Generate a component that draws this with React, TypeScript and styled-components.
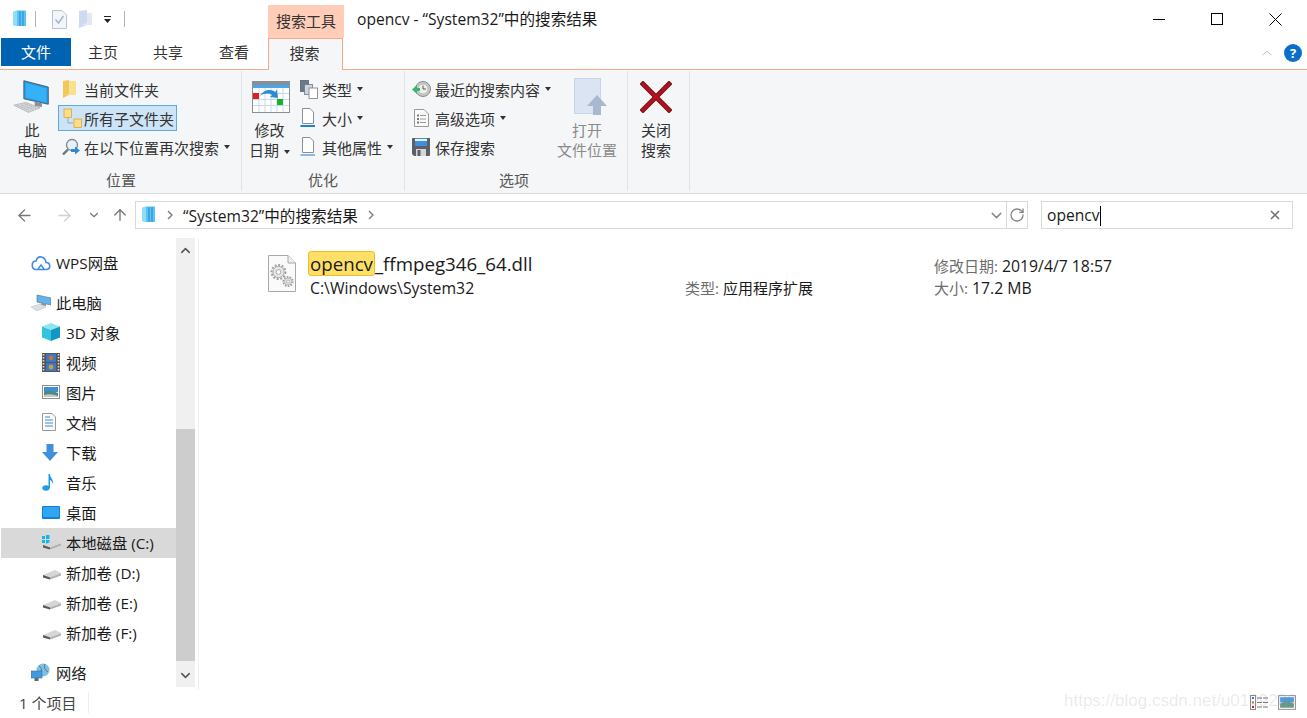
import React from "react";
import styled, { createGlobalStyle } from "styled-components";
import { ArrowLeft, ArrowRight, ArrowUp, ChevronDown, ChevronUp, RotateCw, X } from "lucide-react";

const GlobalStyle = createGlobalStyle`
  html, body { margin: 0; padding: 0; background: #fff; }
  body { font-family: "Open Sans", "Noto Sans CJK SC", sans-serif; font-size: 15px; color: #1a1a1a; }
  * { box-sizing: border-box; }
`;

/* ---------- icons ---------- */

const AppIcon = ({ size = 16 }: { size?: number }) => (
  <svg width={size} height={size + 2} viewBox="0 0 16 18">
    <path d="M1 2 L5 0.5 H14 V16 H5 L1 15 Z" fill="#5cc3f5" />
    <path d="M1 2 L5 0.5 V16 L1 15 Z" fill="#8fdcfb" />
    <path d="M8 1 V16 M11 1 V16" stroke="#1c87cf" strokeWidth="1" />
  </svg>
);

const CheckDoc = () => (
  <svg width="15" height="19" viewBox="0 0 15 19">
    <path d="M.5.5 H10 L14.5 5 V18.5 H.5 Z" fill="#f2f5fa" stroke="#b9c3d6" />
    <path d="M3.5 9.5 L6.5 13 L11.5 6" fill="none" stroke="#a7b2c8" strokeWidth="1.4" />
  </svg>
);

const FadedFolder = () => (
  <svg width="13" height="19" viewBox="0 0 13 19">
    <path d="M0 1 L8 0 V15 L0 18 Z" fill="#cfdaf0" />
    <path d="M8 3 H13 V15 H2 L8 13 Z" fill="#e2e9f6" />
  </svg>
);

const QatMenu = () => (
  <svg width="7" height="7" viewBox="0 0 7 7">
    <path d="M0 .5 H7" stroke="#222" />
    <path d="M0 3 H7 L3.5 7 Z" fill="#222" />
  </svg>
);

const Computer = () => (
  <svg width="38" height="36" viewBox="0 0 42 38">
    <path d="M12 1 L39 8 V27 L12 21 Z" fill="#1d9bf0" stroke="#555" strokeWidth="1" />
    <path d="M14 3.5 L37 9.5 V25 L14 19.5 Z" fill="#36b0f7" />
    <path d="M24 24 L32 26 V30 L24 29 Z" fill="#8c9199" />
    <path d="M1 28 L14 25 L30 31 L17 36 Z" fill="#d5d7da" stroke="#a5a7aa" strokeWidth=".7" />
    <path d="M5 28.5 L18 33.5 M9 27.5 L22 32.5 M13 26.5 L26 31.5" stroke="#9a9c9f" strokeWidth=".8" strokeDasharray="1.4 1" />
  </svg>
);

const YellowFolder = () => (
  <svg width="13" height="18" viewBox="0 0 13 18">
    <path d="M0 1 L6 0 V15 L0 18 Z" fill="#f2c75c" />
    <path d="M6 1 H13 V15 H2 L6 14 Z" fill="#fbe08f" />
  </svg>
);

const SubFolders = () => (
  <svg width="20" height="21" viewBox="0 0 20 21">
    <path d="M5 9 V15 H10" fill="none" stroke="#9aa4b0" />
    <rect x="1" y="1" width="7.5" height="8.5" fill="#fbdd85" stroke="#d8a73a" strokeWidth=".8" />
    <rect x="11" y="11" width="7.5" height="8.5" fill="#fbdd85" stroke="#d8a73a" strokeWidth=".8" />
  </svg>
);

const SearchAgain = () => (
  <svg width="19" height="18" viewBox="0 0 19 18">
    <circle cx="10" cy="7" r="5.5" fill="#e8f1fa" stroke="#7d8893" strokeWidth="1.3" />
    <path d="M6 11.5 L1 16.5" stroke="#6f7680" strokeWidth="2.4" />
    <path d="M9 11 H13 V8.5 L18 12.5 L13 16.5 V14 H9 Z" fill="#2d8ad8" />
  </svg>
);

const Calendar = () => (
  <svg width="38" height="32" viewBox="0 0 38 32">
    <rect x=".5" y=".5" width="37" height="31" fill="#fff" stroke="#8a8f96" />
    <rect x="0" y="0" width="38" height="4" fill="#8a8f96" />
    <rect x="1" y="4" width="36" height="3" fill="#46a7ea" />
    <path d="M1 12.5 H37 M1 18.5 H37 M1 24.5 H37 M7 7 V31 M13 7 V31 M19 7 V31 M25 7 V31 M31 7 V31" stroke="#c5d9e6" strokeWidth="1" />
    <rect x="1" y="12" width="6" height="6" fill="#dc2020" />
    <rect x="25" y="18" width="6" height="6" fill="#17b02f" />
    <path d="M8 15 C12 8 20 8 23 11 L25 9 L26 17 L18 16 L20 14 C17 12 12 12 8 15 Z" fill="#2d8ad8" />
  </svg>
);

const TypeIcon = () => (
  <svg width="18" height="19" viewBox="0 0 18 19">
    <rect x=".5" y=".5" width="8" height="11" fill="#6a7a8c" stroke="#555" strokeWidth=".7" />
    <rect x="4.5" y="4.5" width="8" height="10" fill="#c8d6e6" stroke="#777" strokeWidth=".8" />
    <rect x="9" y="8" width="8.5" height="10.5" fill="#fff" stroke="#888" strokeWidth=".9" />
  </svg>
);

const SizeIcon = ({ line = "#1f7fd0", thin = false }: { line?: string; thin?: boolean }) => (
  <svg width="16" height="20" viewBox="0 0 16 20">
    <path d="M2.5.5 H10 L13.5 4 V15.5 H2.5 Z" fill="#fff" stroke="#8a8f96" />
    <path d="M.5 18 H15" stroke={line} strokeWidth={thin ? 1 : 2} />
  </svg>
);

const RecentIcon = () => (
  <svg width="19" height="18" viewBox="0 0 19 18">
    <circle cx="11" cy="9" r="7.5" fill="#c7ccc9" stroke="#858a88" />
    <circle cx="11" cy="9" r="5" fill="#eef0ee" stroke="#9da29f" strokeWidth=".6" />
    <path d="M11 5.5 V9 H14" fill="none" stroke="#555" />
    <path d="M0 9.5 L5 5 V8 H8 V11 H5 V14 Z" fill="#3cb371" />
  </svg>
);

const AdvancedIcon = () => (
  <svg width="15" height="18" viewBox="0 0 15 18">
    <path d="M.5.5 H10 L14.5 5 V17.5 H.5 Z" fill="#fafafa" stroke="#9a9a9a" />
    <path d="M6 6.5 H12 M6 10 H12 M6 13.5 H12" stroke="#9a9a9a" />
    <rect x="3" y="5.5" width="2" height="2" fill="#777" />
    <rect x="3" y="9" width="2" height="2" fill="#777" />
    <rect x="3" y="12.5" width="2" height="2" fill="#777" />
  </svg>
);

const SaveIcon = () => (
  <svg width="18" height="18" viewBox="0 0 18 18">
    <path d="M0 1 Q0 0 1 0 H18 V17 Q18 18 17 18 H2 L0 16 Z" fill="#5d6066" />
    <rect x="3" y="0" width="12" height="8" fill="#3f8fdc" />
    <rect x="3" y="1" width="12" height="2" fill="#eaf2fb" />
    <rect x="4" y="11" width="10" height="7" fill="#d4d6d9" />
    <rect x="5.5" y="12" width="3" height="6" fill="#5d6066" />
  </svg>
);

const OpenLocation = () => (
  <svg width="33" height="38" viewBox="0 0 33 38">
    <rect x=".5" y=".5" width="26" height="35" fill="#dbe4f2" stroke="#c8d4e6" />
    <path d="M23 17 L33 28 H27 V37 H19 V28 H13 Z" fill="#a9b7cf" />
  </svg>
);

const BigX = () => (
  <svg width="32" height="32" viewBox="0 0 32 32">
    <path d="M3 3 L29 29 M29 3 L3 29" stroke="#6e1717" strokeWidth="5" strokeLinecap="square" />
    <path d="M3 3 L29 29 M29 3 L3 29" stroke="#b80f1e" strokeWidth="3" strokeLinecap="square" />
  </svg>
);

const Help = () => (
  <svg width="18" height="18" viewBox="0 0 18 18">
    <circle cx="9" cy="9" r="9" fill="#0a6fc8" />
    <text x="9" y="14" textAnchor="middle" fontSize="13" fontWeight="700" fill="#fff" fontFamily="Open Sans">?</text>
  </svg>
);

const WinMin = () => (
  <svg width="12" height="12" viewBox="0 0 12 12"><path d="M0 6.5 H12" stroke="#000" /></svg>
);

const WinMax = () => (
  <svg width="12" height="12" viewBox="0 0 12 12"><rect x=".5" y=".5" width="11" height="11" fill="none" stroke="#000" /></svg>
);

const WinClose = () => (
  <svg width="13" height="13" viewBox="0 0 13 13"><path d="M.5 .5 L12.5 12.5 M12.5 .5 L.5 12.5" stroke="#000" /></svg>
);

const Chevron = () => (
  <svg width="6" height="10" viewBox="0 0 6 10"><path d="M1 1 L5 5 L1 9" fill="none" stroke="#777" strokeWidth="1.3" /></svg>
);

const Cloud = () => (
  <svg width="20" height="17" viewBox="0 0 20 17">
    <path d="M5 15.5 H15 C20 15.5 20 8.5 15 8.5 C14.5 3 7 0 5 7 C0 7 0 15.5 5 15.5 Z" fill="none" stroke="#3f8ae6" strokeWidth="1.6" />
    <path d="M7 15 L10 11 L13 15" fill="none" stroke="#3f8ae6" strokeWidth="1.4" />
  </svg>
);

const SmallPc = () => (
  <svg width="20" height="17" viewBox="0 0 20 17">
    <path d="M6 1 L20 4 V11 L6 8 Z" fill="#5fb4ec" stroke="#6a7a88" strokeWidth=".7" />
    <path d="M10 9 L15 10 V12 L10 11 Z" fill="#8a9098" />
    <path d="M0 13 L9 10 L15 13 L6 17 Z" fill="#dcdfe2" stroke="#b8bbbf" strokeWidth=".5" />
  </svg>
);

const Cube = () => (
  <svg width="18" height="18" viewBox="0 0 18 18">
    <path d="M9 0 L18 3.5 L9 7 L0 3.5 Z" fill="#8de6ee" />
    <path d="M0 3.5 L9 7 V18 L0 14.5 Z" fill="#35c3dc" />
    <path d="M18 3.5 L9 7 V18 L18 14.5 Z" fill="#1096c9" />
  </svg>
);

const Film = () => (
  <svg width="18" height="19" viewBox="0 0 18 19">
    <rect width="18" height="19" fill="#555" />
    <path d="M1.5 1 V18 M16.5 1 V18" stroke="#ddd" strokeWidth="1.6" strokeDasharray="1.6 1.4" />
    <rect x="4" y="1" width="10" height="8" fill="#3a78c8" />
    <rect x="4" y="10" width="10" height="8" fill="#3a78c8" />
    <circle cx="9" cy="5" r="2.4" fill="#c8703a" />
    <circle cx="9" cy="14" r="2.4" fill="#c8a03a" />
  </svg>
);

const Picture = () => (
  <svg width="18" height="14" viewBox="0 0 18 14">
    <rect x=".5" y=".5" width="17" height="13" fill="#fff" stroke="#8f8f8f" />
    <rect x="2" y="2" width="14" height="5" fill="#3f8ed8" />
    <path d="M2 7 Q8 4 16 8 V12 H2 Z" fill="#4e8a7c" />
    <path d="M2 10 Q9 8 16 11 V12 H2 Z" fill="#b9cfc4" />
  </svg>
);

const DocIcon = () => (
  <svg width="14" height="18" viewBox="0 0 14 18">
    <path d="M.5.5 H10 L13.5 4 V17.5 H.5 Z" fill="#fafafa" stroke="#9a9a9a" />
    <path d="M3 4 H8 M3 7 H11 M3 10 H11 M3 13 H11" stroke="#3a8ed6" />
  </svg>
);

const Download = () => (
  <svg width="16" height="17" viewBox="0 0 16 17">
    <path d="M4.5 0 H11.5 V8 H16 L8 17 L0 8 H4.5 Z" fill="#3f8fdc" />
  </svg>
);

const Music = () => (
  <svg width="12" height="17" viewBox="0 0 12 17">
    <ellipse cx="4" cy="14" rx="3.6" ry="2.8" fill="#1f9be8" />
    <path d="M6.5 14 V0 H8 C8 4 12 5 11 10 C10.5 7.5 9 6.5 8 6 V14 Z" fill="#1f9be8" />
  </svg>
);

const Desktop = () => (
  <svg width="18" height="13" viewBox="0 0 18 13">
    <rect width="18" height="13" rx="1" fill="#0f7fd8" />
    <rect x="1" y="1" width="16" height="10" fill="#2fa6f2" />
  </svg>
);

const Drive = ({ win = false }: { win?: boolean }) => (
  <svg width="20" height="15" viewBox="0 0 20 15">
    {win && <path d="M0 1 H3 V4 H0 Z M4 0 H7.5 V4 H4 Z M0 5 H3 V8 H0 Z M4 5 H7.5 V9 H4 Z" fill="#12b5ee" />}
    <path d="M1 10 L13 5 L19 8 L19 10 L8 14 L1 12 Z" fill="#d5d6d8" />
    <path d="M1 10 L8 12.5 V14.5 L1 12.5 Z" fill="#55585c" />
    <path d="M8 12.5 L19 8.5 V10.5 L8 14.5 Z" fill="#aeb0b3" />
  </svg>
);

const Network = () => (
  <svg width="19" height="18" viewBox="0 0 19 18">
    <circle cx="12" cy="7" r="6.5" fill="#7fc0dd" />
    <path d="M8 3 Q12 5 10 9 M14 1 Q12 6 17 9" fill="none" stroke="#3f7fa6" strokeWidth="1" />
    <rect x="0" y="8" width="11" height="7" fill="#3f9be0" stroke="#4a6a86" strokeWidth=".6" />
    <path d="M3.5 15 H7.5 V18 H3.5 Z" fill="#5a6a78" />
  </svg>
);

const DllIcon = () => (
  <svg width="30" height="38" viewBox="0 0 30 38">
    <path d="M1.5 .5 H21 L28.5 8 V36.5 H1.5 Z" fill="#fafafa" stroke="#a8a8a8" />
    <path d="M21 .5 V8 H28.5" fill="#eee" stroke="#a8a8a8" />
    <circle cx="11.5" cy="17" r="7" fill="none" stroke="#a0a0a0" strokeWidth="2" strokeDasharray="2 1.6" />
    <circle cx="11.5" cy="17" r="5.6" fill="#e8e8e8" stroke="#999" strokeWidth=".8" />
    <circle cx="11.5" cy="17" r="2.4" fill="#fafafa" stroke="#999" strokeWidth=".8" />
    <circle cx="21" cy="26.5" r="4.7" fill="none" stroke="#a0a0a0" strokeWidth="1.8" strokeDasharray="1.6 1.3" />
    <circle cx="21" cy="26.5" r="3.6" fill="#e8e8e8" stroke="#999" strokeWidth=".7" />
    <circle cx="21" cy="26.5" r="1.5" fill="#fafafa" stroke="#999" strokeWidth=".7" />
  </svg>
);

const DetailsView = () => (
  <svg width="18" height="15" viewBox="0 0 18 15">
    <rect x=".5" y=".5" width="5" height="14" fill="#fff" stroke="#8c8c8c" />
    <rect x="2" y="2" width="2" height="2" fill="#3a78c8" />
    <rect x="2" y="6.5" width="2" height="2" fill="#b8743a" />
    <rect x="2" y="11" width="2" height="2" fill="#d02020" />
    <path d="M7 3 H18 M7 7.5 H18 M7 12 H18" stroke="#777" strokeDasharray="5 1" />
  </svg>
);

const ThumbView = () => (
  <svg width="18" height="15" viewBox="0 0 17 14">
    <rect x=".5" y=".5" width="16" height="13" fill="#fff" stroke="#9a9a9a" />
    <rect x="2" y="2" width="13" height="5" fill="#4f9be0" />
    <path d="M2 8 Q8 4 15 8 V12 H2 Z" fill="#6a9a8a" />
  </svg>
);

/* ---------- window chrome ---------- */

const Page = styled.div`
  position: relative;
  width: 1307px;
  height: 718px;
  display: flex;
  flex-direction: column;
  overflow: hidden;
  background: #fff;
`;

const TitleBar = styled.div`
  height: 38px;
  display: flex;
  flex: none;
`;

const QuickAccess = styled.div`
  width: 268px;
  display: flex;
  align-items: center;
  padding: 0 0 0 12px;
`;

const QatSep = styled.span<{ $ml: number; $mr: number }>`
  width: 1px;
  height: 16px;
  background: #b4b4b4;
  margin: 0 ${(p) => p.$mr}px 0 ${(p) => p.$ml}px;
`;

const QatGap = styled.span<{ $w: number }>`
  width: ${(p) => p.$w}px;
`;

const ContextLabel = styled.div`
  width: 76px;
  margin-top: 5px;
  background: #ffcdb8;
  text-align: center;
  line-height: 33px;
  font-size: 15px;
  color: #333;
`;

const WindowTitle = styled.div`
  padding-left: 13px;
  line-height: 39px;
  font-size: 15.6px;
  color: #1a1a1a;
`;

const WindowButtons = styled.div`
  margin-left: auto;
  display: flex;
  padding-right: 2px;
`;

const WinButton = styled.div`
  width: 58.5px;
  height: 38px;
  display: flex;
  align-items: center;
  justify-content: center;
`;

const TabStrip = styled.div`
  position: relative;
  height: 32px;
  flex: none;
  display: flex;
  align-items: flex-start;
  border-bottom: 1px solid #f7a886;
`;

const FileTab = styled.div`
  width: 70px;
  height: 28px;
  margin-left: 1px;
  background: #0063b1;
  color: #fff;
  text-align: center;
  line-height: 29px;
  font-size: 15px;
`;

const Tab = styled.div<{ $w?: number }>`
  width: ${(p) => p.$w ?? 65}px;
  padding-right: 1px;
  text-align: center;
  line-height: 29px;
  font-size: 15px;
  color: #333;
`;

const ActiveTab = styled.div`
  width: 75px;
  height: 32px;
  padding-right: 2px;
  background: #f5f6f7;
  border: 1px solid #f7a886;
  border-bottom: none;
  text-align: center;
  line-height: 29px;
  font-size: 15px;
  color: #333;
`;

const TabTools = styled.div`
  margin-left: auto;
  display: flex;
  align-items: center;
  gap: 9px;
  height: 30px;
  padding-right: 5px;
  color: #b4b4b4;
`;

/* ---------- ribbon ---------- */

const Ribbon = styled.div`
  height: 124px;
  flex: none;
  display: flex;
  align-items: flex-start;
  padding-left: 1px;
  background: #f5f6f7;
  border-bottom: 1px solid #dadbdc;
`;

const Group = styled.div<{ $w: number }>`
  width: ${(p) => p.$w}px;
  height: 120px;
  margin-top: 1px;
  display: flex;
  flex-direction: column;
  border-right: 1px solid #e1e3e6;
`;

const GroupBody = styled.div<{ $pl: number }>`
  flex: 1;
  display: flex;
  padding-left: ${(p) => p.$pl}px;
`;

const GroupLabel = styled.div<{ $pr?: number }>`
  height: 20px;
  padding-right: ${(p) => p.$pr ?? 0}px;
  line-height: 19px;
  text-align: center;
  font-size: 15px;
  color: #555;
`;

const BigButton = styled.div<{ $w: number; $disabled?: boolean }>`
  width: ${(p) => p.$w}px;
  flex: none;
  display: flex;
  flex-direction: column;
  align-items: center;
  font-size: 15px;
  line-height: 20px;
  text-align: center;
  white-space: nowrap;
  color: ${(p) => (p.$disabled ? "#8a8a8a" : "#333")};
`;

const BigIcon = styled.div<{ $pl?: number }>`
  height: 49px;
  display: flex;
  align-items: center;
  justify-content: center;
  padding: 2px 0 0 ${(p) => p.$pl ?? 0}px;
`;

const SmallColumn = styled.div<{ $ml?: number; $w?: number }>`
  display: flex;
  flex-direction: column;
  align-items: flex-start;
  flex: none;
  gap: 3px;
  padding-top: 5px;
  margin-left: ${(p) => p.$ml ?? 0}px;
  width: ${(p) => (p.$w ? `${p.$w}px` : "auto")};
`;

const SmallRow = styled.div<{ $selected?: boolean; $icon: number; $pl?: number }>`
  height: 26px;
  display: flex;
  align-items: center;
  padding: 0 3px 0 ${(p) => p.$pl ?? 4}px;
  font-size: 15px;
  color: #333;
  white-space: nowrap;
  background: ${(p) => (p.$selected ? "#cde4f7" : "transparent")};
  outline: ${(p) => (p.$selected ? "1px solid #62a8e5" : "none")};
  outline-offset: -1px;
  & > svg {
    flex: none;
    margin-right: ${(p) => p.$icon}px;
  }
`;

const Caret = styled.span`
  display: inline-block;
  width: 0;
  height: 0;
  margin-left: 5px;
  vertical-align: middle;
  border-left: 3.5px solid transparent;
  border-right: 3.5px solid transparent;
  border-top: 4px solid #333;
`;

/* ---------- address bar ---------- */

const NavBar = styled.div`
  height: 44px;
  flex: none;
  display: flex;
  align-items: center;
  padding: 0 14px 2px 15px;
`;

const NavButtons = styled.div`
  width: 120px;
  display: flex;
  align-items: center;
`;

const NavSlot = styled.div<{ $w: number; $faded?: boolean }>`
  width: ${(p) => p.$w}px;
  display: flex;
  align-items: center;
  color: ${(p) => (p.$faded ? "#d0d0d0" : "#777")};
`;

const AddressBox = styled.div`
  width: 893px;
  height: 28px;
  display: flex;
  align-items: center;
  border: 1px solid #d9d9d9;
  padding-left: 5px;
  font-size: 15.6px;
  color: #1a1a1a;
`;

const Crumb = styled.span`
  margin: 0 10px;
  display: flex;
`;

const AddressTools = styled.div`
  margin-left: auto;
  height: 100%;
  display: flex;
  align-items: center;
  color: #888;
`;

const RefreshSlot = styled.div`
  width: 21px;
  height: 100%;
  display: flex;
  align-items: center;
  justify-content: center;
  border-left: 1px solid #d9d9d9;
  margin-left: 1px;
`;

const SearchBox = styled.div`
  width: 252px;
  height: 28px;
  margin-left: 13px;
  display: flex;
  align-items: center;
  justify-content: space-between;
  border: 1px solid #d9d9d9;
  padding: 0 10px 0 5px;
  font-size: 15.6px;
`;

const Cursor = styled.span`
  display: inline-block;
  width: 1px;
  height: 20px;
  background: #000;
  vertical-align: middle;
`;

/* ---------- body ---------- */

const Body = styled.div`
  flex: 1;
  display: flex;
  min-height: 0;
`;

const NavPane = styled.div`
  width: 175px;
  padding-top: 10px;
  margin-left: 1px;
  display: flex;
  flex-direction: column;
`;

const NavRow = styled.div<{ $level: number; $selected?: boolean; $gap?: number }>`
  height: 30px;
  flex: none;
  display: flex;
  align-items: center;
  margin-top: ${(p) => p.$gap ?? 0}px;
  padding: 0 0 2px ${(p) => (p.$level ? 41 : 30)}px;
  background: ${(p) => (p.$selected ? "#d9d9d9" : "transparent")};
  font-size: 15.3px;
  color: #1a1a1a;
  white-space: nowrap;
`;

const NavIcon = styled.span<{ $level: number }>`
  width: ${(p) => (p.$level ? 24 : 25)}px;
  display: flex;
  align-items: center;
  justify-content: flex-start;
`;

const ScrollBar = styled.div`
  width: 19px;
  margin-bottom: 3px;
  background: #f0f0f0;
  display: flex;
  flex-direction: column;
  color: #555;
`;

const ScrollArrow = styled.div`
  height: 24px;
  flex: none;
  display: flex;
  align-items: center;
  justify-content: center;
`;

const ScrollTrack = styled.div`
  flex: 1;
  padding-top: 167px;
  padding-bottom: 2px;
  display: flex;
`;

const ScrollThumb = styled.div`
  flex: 1;
  background: #cdcdcd;
`;

const Results = styled.div`
  flex: 1;
  border-left: 1px solid #f0f0f0;
  margin-left: 3px;
  padding: 13px 0 0 68px;
`;

const ResultRow = styled.div`
  display: grid;
  grid-template-columns: 43px 375px 249px 1fr;
  height: 44px;
`;

const ResultIcon = styled.div`
  padding-top: 4px;
`;

const ResultName = styled.div`
  font-size: 18.7px;
  line-height: 25px;
  white-space: nowrap;
  color: #1a1a1a;
  margin-left: -2px;
`;

const Highlight = styled.span`
  display: inline-block;
  padding: 0 1px;
  background: #ffe066;
  border: 1px solid #f5b92c;
  border-radius: 3px;
  line-height: 23px;
`;

const ResultPath = styled.div`
  font-size: 15.8px;
  line-height: 20px;
  margin-top: 2px;
  color: #1a1a1a;
`;

const MetaColumn = styled.div`
  padding-top: 27px;
  font-size: 15px;
  line-height: 20px;
  white-space: nowrap;
`;

const MetaPair = styled.div`
  font-size: 15.8px;
  line-height: 20px;
  height: 22px;
  white-space: nowrap;
  padding-top: 5px;
  & + & {
    height: 24px;
  }
`;

const MetaKey = styled.span`
  font-size: 15px;
  color: #6d6d6d;
  margin-right: 4px;
`;

const StatusBar = styled.div`
  height: 28px;
  flex: none;
  display: flex;
  align-items: center;
  padding: 0 11px 4px 19px;
  font-size: 15px;
  color: #444;
`;

const StatusText = styled.div`
  width: 70px;
  border-right: 1px solid #eee;
`;

const ViewIcons = styled.div`
  margin-left: auto;
  display: flex;
  align-items: center;
  gap: 10px;
`;

const Watermark = styled.div`
  position: absolute;
  left: 1064px;
  top: 690px;
  font-family: "Liberation Sans", sans-serif;
  font-size: 17px;
  line-height: 22px;
  color: rgba(120, 120, 120, 0.16);
  white-space: nowrap;
`;

/* ---------- data ---------- */

const navItems: { label: string; icon: React.ReactNode; level: number; gap?: number; selected?: boolean }[] = [
  { label: "WPS网盘", icon: <Cloud />, level: 0 },
  { label: "此电脑", icon: <SmallPc />, level: 0, gap: 10 },
  { label: "3D 对象", icon: <Cube />, level: 1 },
  { label: "视频", icon: <Film />, level: 1 },
  { label: "图片", icon: <Picture />, level: 1 },
  { label: "文档", icon: <DocIcon />, level: 1 },
  { label: "下载", icon: <Download />, level: 1 },
  { label: "音乐", icon: <Music />, level: 1 },
  { label: "桌面", icon: <Desktop />, level: 1 },
  { label: "本地磁盘 (C:)", icon: <Drive win />, level: 1, selected: true },
  { label: "新加卷 (D:)", icon: <Drive />, level: 1 },
  { label: "新加卷 (E:)", icon: <Drive />, level: 1 },
  { label: "新加卷 (F:)", icon: <Drive />, level: 1 },
  { label: "网络", icon: <Network />, level: 0, gap: 10 },
];

export default function App() {
  return (
    <Page>
      <GlobalStyle />
      <TitleBar>
        <QuickAccess>
          <AppIcon />
          <QatSep $ml={7} $mr={16} />
          <CheckDoc />
          <QatGap $w={12} />
          <FadedFolder />
          <QatGap $w={12} />
          <QatMenu />
          <QatSep $ml={13} $mr={0} />
        </QuickAccess>
        <ContextLabel>搜索工具</ContextLabel>
        <WindowTitle>opencv - “System32”中的搜索结果</WindowTitle>
        <WindowButtons>
          <WinButton><WinMin /></WinButton>
          <WinButton><WinMax /></WinButton>
          <WinButton><WinClose /></WinButton>
        </WindowButtons>
      </TitleBar>

      <TabStrip>
        <FileTab>文件</FileTab>
        <Tab>主页</Tab>
        <Tab>共享</Tab>
        <Tab $w={67}>查看</Tab>
        <ActiveTab>搜索</ActiveTab>
        <TabTools>
          <ChevronUp size={16} strokeWidth={1.2} />
          <Help />
        </TabTools>
      </TabStrip>

      <Ribbon>
        <Group $w={241}>
          <GroupBody $pl={8}>
            <BigButton $w={46}>
              <BigIcon><Computer /></BigIcon>
              此<br />电脑
            </BigButton>
            <SmallColumn $ml={3}>
              <SmallRow $icon={8} $pl={5}><YellowFolder />当前文件夹</SmallRow>
              <SmallRow $icon={1} $pl={5} $selected><SubFolders />所有子文件夹</SmallRow>
              <SmallRow $icon={3}><SearchAgain />在以下位置再次搜索<Caret /></SmallRow>
            </SmallColumn>
          </GroupBody>
          <GroupLabel>位置</GroupLabel>
        </Group>

        <Group $w={163}>
          <GroupBody $pl={4}>
            <BigButton $w={47}>
              <BigIcon $pl={2}><Calendar /></BigIcon>
              修改<br /><span>日期<Caret /></span>
            </BigButton>
            <SmallColumn $ml={3}>
              <SmallRow $icon={4}><TypeIcon />类型<Caret /></SmallRow>
              <SmallRow $icon={6}><SizeIcon />大小<Caret /></SmallRow>
              <SmallRow $icon={6}><SizeIcon thin />其他属性<Caret /></SmallRow>
            </SmallColumn>
          </GroupBody>
          <GroupLabel>优化</GroupLabel>
        </Group>

        <Group $w={223}>
          <GroupBody $pl={3}>
            <SmallColumn $w={146}>
              <SmallRow $icon={4}><RecentIcon />最近的搜索内容<Caret /></SmallRow>
              <SmallRow $icon={6} $pl={6}><AdvancedIcon />高级选项<Caret /></SmallRow>
              <SmallRow $icon={5}><SaveIcon />保存搜索</SmallRow>
            </SmallColumn>
            <BigButton $w={66} $disabled>
              <BigIcon $pl={6}><OpenLocation /></BigIcon>
              打开<br />文件位置
            </BigButton>
          </GroupBody>
          <GroupLabel $pr={4}>选项</GroupLabel>
        </Group>

        <Group $w={62}>
          <GroupBody $pl={0}>
            <BigButton $w={56}>
              <BigIcon><BigX /></BigIcon>
              关闭<br />搜索
            </BigButton>
          </GroupBody>
        </Group>
      </Ribbon>

      <NavBar>
        <NavButtons>
          <NavSlot $w={40}><ArrowLeft size={19} strokeWidth={1.6} /></NavSlot>
          <NavSlot $w={32} $faded><ArrowRight size={19} strokeWidth={1.6} /></NavSlot>
          <NavSlot $w={24}><ChevronDown size={14} strokeWidth={2} /></NavSlot>
          <NavSlot $w={24}><ArrowUp size={18} strokeWidth={1.8} /></NavSlot>
        </NavButtons>
        <AddressBox>
          <AppIcon />
          <Crumb><Chevron /></Crumb>
          “System32”中的搜索结果
          <Crumb><Chevron /></Crumb>
          <AddressTools>
            <ChevronDown size={17} strokeWidth={2} />
            <RefreshSlot><RotateCw size={16} strokeWidth={2} /></RefreshSlot>
          </AddressTools>
        </AddressBox>
        <SearchBox>
          <span>opencv<Cursor /></span>
          <X size={14} strokeWidth={3} color="#777" />
        </SearchBox>
      </NavBar>

      <Body>
        <NavPane>
          {navItems.map((item) => (
            <NavRow key={item.label} $level={item.level} $gap={item.gap} $selected={item.selected}>
              <NavIcon $level={item.level}>{item.icon}</NavIcon>
              {item.label}
            </NavRow>
          ))}
        </NavPane>
        <ScrollBar>
          <ScrollArrow><ChevronUp size={15} strokeWidth={2.4} /></ScrollArrow>
          <ScrollTrack><ScrollThumb /></ScrollTrack>
          <ScrollArrow><ChevronDown size={15} strokeWidth={2.4} /></ScrollArrow>
        </ScrollBar>
        <Results>
          <ResultRow>
            <ResultIcon><DllIcon /></ResultIcon>
            <div>
              <ResultName><Highlight>opencv</Highlight>_ffmpeg346_64.dll</ResultName>
              <ResultPath>C:\Windows\System32</ResultPath>
            </div>
            <MetaColumn><MetaKey>类型:</MetaKey>应用程序扩展</MetaColumn>
            <div>
              <MetaPair><MetaKey>修改日期:</MetaKey>2019/4/7 18:57</MetaPair>
              <MetaPair><MetaKey>大小:</MetaKey>17.2 MB</MetaPair>
            </div>
          </ResultRow>
        </Results>
      </Body>

      <StatusBar>
        <StatusText>1 个项目</StatusText>
        <ViewIcons>
          <DetailsView />
          <ThumbView />
        </ViewIcons>
      </StatusBar>
      <Watermark>https://blog.csdn.net/u0109200</Watermark>
    </Page>
  );
}
